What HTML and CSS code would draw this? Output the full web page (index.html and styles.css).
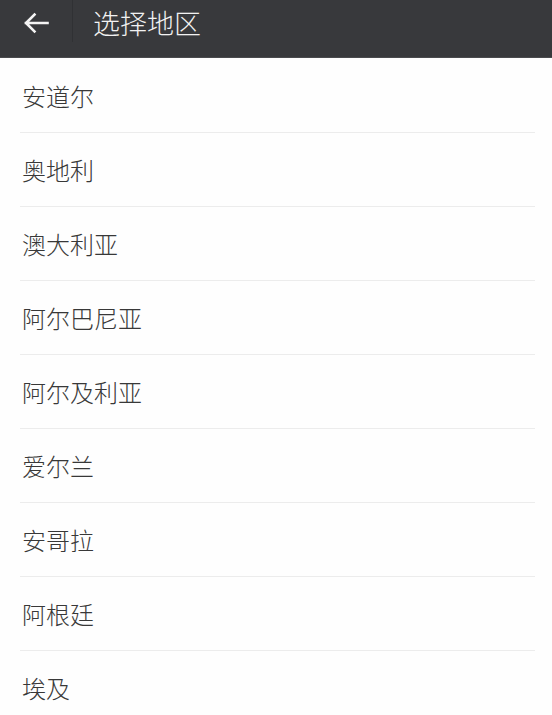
FILE: index.html
```html
<!DOCTYPE html>
<html lang="zh-CN">
<head>
<meta charset="utf-8">
<link rel="stylesheet" href="styles.css">
</head>
<body>
<header class="bar">
  <div class="back">
    <svg width="26" height="22" viewBox="0 0 26 22" aria-hidden="true">
      <path d="M24.5 11H3 M11.5 2.5L3 11l8.5 8.5" fill="none" stroke="#f4f4f4" stroke-width="2.6" stroke-linecap="square"/>
    </svg>
  </div>
  <div class="title">选择地区</div>
</header>
<ul class="list">
  <li class="row">安道尔</li>
  <li class="row">奥地利</li>
  <li class="row">澳大利亚</li>
  <li class="row">阿尔巴尼亚</li>
  <li class="row">阿尔及利亚</li>
  <li class="row">爱尔兰</li>
  <li class="row">安哥拉</li>
  <li class="row">阿根廷</li>
  <li class="row">埃及</li>
</ul>
</body>
</html>
```

FILE: styles.css
```css
html, body {
  margin: 0;
  padding: 0;
  background: #fefefe;
  font-family: "Noto Sans CJK SC", "Noto Sans", sans-serif;
  overflow: hidden;
}
.bar {
  height: 58px;
  background: #38393c;
  display: flex;
  align-items: flex-start;
  box-shadow: inset 0 -1px 0 #4a4b4e;
}
.back {
  width: 73px;
  height: 42px;
  border-right: 1px solid #303134;
  display: flex;
  align-items: center;
  padding-left: 23px;
  box-sizing: border-box;
  padding-top: 4px;
}
.back svg {
  display: block;
}
.title {
  margin-left: 20px;
  color: #f2f2f2;
  font-size: 27px;
  font-weight: 300;
  line-height: 46px;
}
.list {
  list-style: none;
  margin: 0;
  padding: 1px 0 0 0;
}
.row {
  height: 73px;
  margin: 0 17px 0 20px;
  padding-left: 2px;
  border-bottom: 1px solid #ececec;
  display: flex;
  align-items: center;
  font-size: 24px;
  font-weight: 300;
  color: #383838;
}
```
